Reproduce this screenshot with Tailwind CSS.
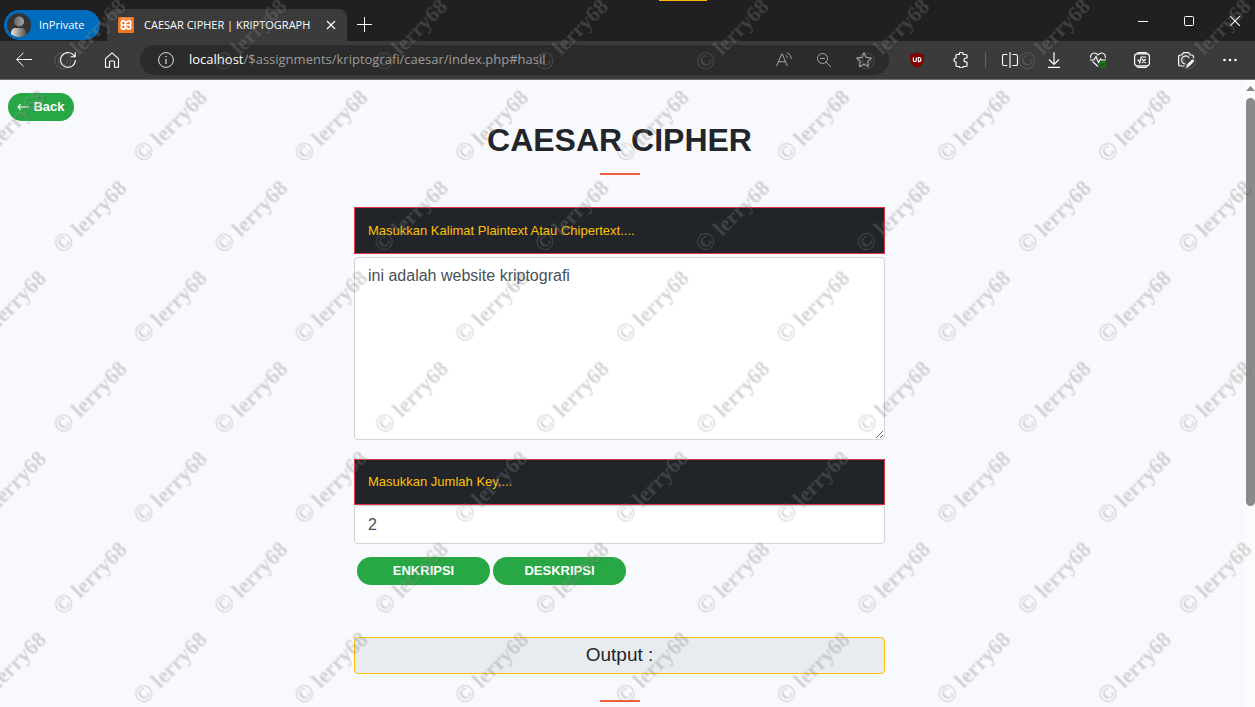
<!DOCTYPE html>
<html lang="id">
<head>
<meta charset="utf-8">
<meta name="viewport" content="width=device-width, initial-scale=1">
<title>CAESAR CIPHER | KRIPTOGRAPHY</title>
<script src="https://cdn.jsdelivr.net/npm/@tailwindcss/browser@4"></script>
</head>
<body class="flex h-screen flex-col overflow-hidden bg-[#f8f9fc] font-['Liberation_Sans',Arial,sans-serif] text-[#212529]">

<!-- Browser tab strip -->
<header class="relative flex h-[41px] shrink-0 items-end bg-[#202020] font-['Open_Sans','Noto_Sans',sans-serif] text-[11px] text-white">
  <div class="absolute left-[659px] top-0 h-px w-12 bg-[#ffb900]"></div>
  <button class="mb-px ml-1 flex h-[30px] w-24 items-center gap-2 rounded-full bg-[#006cbe] pl-[3px]">
    <svg class="size-6" viewBox="0 0 24 24">
      <defs>
        <linearGradient id="head"><stop offset="0" stop-color="#686664"/><stop offset="1" stop-color="#a8a6a4"/></linearGradient>
        <linearGradient id="torso"><stop offset="0" stop-color="#e8e6e4"/><stop offset="1" stop-color="#55534f"/></linearGradient>
        <clipPath id="disc"><circle cx="12" cy="12" r="12"/></clipPath>
      </defs>
      <circle cx="12" cy="12" r="12" fill="#363432"/>
      <g clip-path="url(#disc)"><path d="M4 24v-4c0-3 2-5 5-5h5c3 0 5 2 5 5v4z" fill="url(#torso)"/><circle cx="12" cy="8.500" r="5" fill="url(#head)"/></g>
    </svg>
    <span>InPrivate</span>
  </button>
  <div class="ml-[7px] flex h-8 w-60 items-center rounded-t-lg bg-[#3b3b3b] pl-[11px]">
    <svg class="size-4 shrink-0" viewBox="0 0 16 16"><rect width="16" height="16" rx="1" fill="#f37623"/><path d="M3 1.800h10" stroke="#fbd0ad" stroke-width=".8"/><path d="M6.900 8H5.300a2.100 2.100 0 1 1 2.100-2.100v4.200A2.100 2.100 0 1 1 5.300 8M9.100 8h1.600a2.100 2.100 0 1 0-2.100-2.100M8.600 10.100A2.100 2.100 0 1 0 10.700 8H7" fill="none" stroke="#fff" stroke-width="1.700"/></svg>
    <span class="ml-2.5 w-[173px] shrink-0 whitespace-nowrap">CAESAR CIPHER | KRIPTOGRAPH</span>
    <button class="ml-1 grid size-5 place-items-center" aria-label="Close tab"><svg class="size-[10px]" viewBox="0 0 10 10" stroke="#fff" stroke-width="1.100"><path d="M1 1l8 8M9 1l-8 8"/></svg></button>
  </div>
  <button class="ml-[7px] grid h-[34px] w-5 place-items-center" aria-label="New tab"><svg class="size-[15px]" viewBox="0 0 15 15" stroke="#fff"><path d="M0 7.500h15M7.500 0v15"/></svg></button>
  <div class="ml-auto flex h-full items-center gap-9 pr-[15px]">
    <button aria-label="Minimize"><svg class="size-[10px]" viewBox="0 0 10 10" stroke="#fff"><path d="M0 5.500h10"/></svg></button>
    <button aria-label="Maximize"><svg class="size-[10px]" viewBox="0 0 10 10" stroke="#fff" fill="none"><rect x=".5" y=".5" width="9" height="9" rx="1"/></svg></button>
    <button aria-label="Close"><svg class="size-[10px]" viewBox="0 0 10 10" stroke="#fff" stroke-width="1.100"><path d="M0 0l10 10M10 0L0 10"/></svg></button>
  </div>
</header>

<!-- Browser toolbar -->
<nav class="flex h-[39px] shrink-0 items-center border-b border-[#6e6e6e] bg-[#3b3b3b] pl-4 pr-[17px] text-white" aria-label="Browser">
  <button aria-label="Back"><svg class="size-4" viewBox="0 0 16 16" fill="none" stroke="#fff"><path d="M16 7.500H.7M7.500.7L.7 7.500l6.800 6.800"/></svg></button>
  <button class="ml-7" aria-label="Reload"><svg class="size-4" viewBox="0 0 16 16" fill="none" stroke="#fff" stroke-width="1.100"><path d="M15.400 8a7.400 7.400 0 1 1-2-5.100L15 4.500M15.200.3v4.400h-4.500"/></svg></button>
  <button class="ml-7" aria-label="Home"><svg class="size-4" viewBox="0 0 16 16" fill="none" stroke="#fff" stroke-width="1.100" stroke-linejoin="round"><path d="M1.500 6.600L8 .9l6.500 5.700v8.700h-4V10c0-.6-.4-1-1-1h-3c-.6 0-1 .4-1 1v5.300h-4z"/></svg></button>
  <div class="ml-5 flex h-[30px] min-w-0 flex-1 items-center rounded-full bg-[#2b2b2b] pl-[18px] pr-[17px]">
    <svg class="size-4 shrink-0" viewBox="0 0 16 16" fill="none" stroke="#e0e0e0"><circle cx="8" cy="8" r="7.400"/><path d="M8 7v5M8 4v1.300" stroke-width="1.200"/></svg>
    <div role="textbox" contenteditable="true" spellcheck="false" aria-label="Address" class="ml-[15px] flex-1 whitespace-nowrap font-['Open_Sans','Noto_Sans',sans-serif] text-[13px] text-[#9b9b9b] outline-none"><span class="text-white">localhost</span>/$assignments/kriptografi/caesar/index.php#hasil</div>
    <button aria-label="Read aloud"><svg class="size-4" viewBox="0 0 16 16" fill="none" stroke="#a6a6a6"><path d="M.6 14L5.700 2h.6l5 12M2.400 9.800h7.200M9.700 3c1 .7 1.500 1.800 1.500 3M11.200.7c2.500 1.300 4 3.500 4 6.300"/></svg></button>
    <button class="ml-6" aria-label="Zoom out"><svg class="size-4" viewBox="0 0 16 16" fill="none" stroke="#a6a6a6"><circle cx="6.500" cy="6.500" r="5"/><path d="M4 6.500h5M10 10l5 5"/></svg></button>
    <button class="ml-6" aria-label="Add to favorites"><svg class="size-4" viewBox="0 0 16 16" fill="none" stroke="#a6a6a6" stroke-width="1.100" stroke-linejoin="round"><path d="M8 .8l2.200 4.600 5.100.7-3.700 3.500.9 5.100L8 12.300l-4.500 2.400.9-5.100L.7 6.100l5.100-.7z"/></svg></button>
  </div>
  <div class="ml-5 flex shrink-0 items-center gap-7">
    <button aria-label="uBlock"><svg class="size-4" viewBox="0 0 16 16"><path d="M8 .3c2 1.400 4 2 6.700 2v6c0 3.300-2.500 5.500-6.700 7.400-4.200-1.900-6.700-4.100-6.700-7.400v-6C4 2.300 6 1.700 8 .3z" fill="#800000"/><path d="M4.400 5.500v2.800c0 1.800 2.900 1.800 2.900 0V5.500M9.300 5.500v4.100h.7c2.600 0 2.600-4.100 0-4.100z" fill="none" stroke="#fff" stroke-width="1.200"/></svg></button>
    <button aria-label="Extensions"><svg class="size-4" viewBox="0 0 16 16" fill="none" stroke="#fff" stroke-width="1.200" stroke-linejoin="round"><path d="M4 2.500h2.300a2 2 0 1 1 3.900 0h2.800a1 1 0 0 1 1 1V6h-1a2 2 0 1 0 0 4h1v3.500a1 1 0 0 1-1 1h-2.800a2 2 0 0 1-3.900 0H4a1 1 0 0 1-1-1V10a2 2 0 1 1 0-4V3.500a1 1 0 0 1 1-1z"/></svg></button>
    <div class="-mx-3 h-4 w-px bg-[#656565]"></div>
    <button aria-label="Split screen"><svg class="size-4" viewBox="0 0 16 16" fill="none" stroke="#fff" stroke-width="1.100"><path d="M8 0v16M5.500 2.500H2a1.500 1.500 0 0 0-1.500 1.500v8A1.500 1.500 0 0 0 2 13.500h3.500M10.500 2.500H14a1.500 1.500 0 0 1 1.500 1.500v8a1.500 1.500 0 0 1-1.500 1.500h-3.500"/></svg></button>
    <button aria-label="Downloads"><svg class="size-4" viewBox="0 0 16 16" fill="none" stroke="#fff" stroke-width="1.200"><path d="M8 .3v12M3 7.500l5 5 5-5M2 15.400h12"/></svg></button>
    <button aria-label="Browser essentials"><svg class="size-4" viewBox="0 0 16 16" fill="none" stroke="#fff" stroke-width="1.100"><path d="M.8 6C.1 3.500 1.700 1 4.300 1c1.500 0 2.800.9 3.700 2 .9-1.100 2.200-2 3.700-2 2.600 0 4.200 2.500 3.500 5M0 8h4l2-3.500 2.500 6L10.500 7l1 1H16M2.500 9.500L8 14.500"/><circle cx="12.500" cy="12.500" r="3.500" fill="#107c10" stroke="none"/><path d="M10.800 12.500l1.200 1.200 2-2.200" stroke="#333"/></svg></button>
    <button aria-label="Math solver"><svg class="size-4" viewBox="0 0 16 16" fill="none" stroke="#fff" stroke-width="1.200"><rect x=".6" y="1.800" width="14.800" height="12" rx="2.500"/><path d="M2.800 1.700C3 .8 3.700.6 4.500.6h7c.8 0 1.500.2 1.700 1.100M2.800 14c.2 1.100.9 1.400 1.700 1.400h7c.8 0 1.500-.3 1.700-1.400"/><path d="M3.500 8.200h1l1.200 2.600L7.200 5h5M8 7l3.700 4M11.700 7L8 11"/></svg></button>
    <button aria-label="Screenshot"><svg class="size-4" viewBox="0 0 16 16" fill="none" stroke="#fff" stroke-width="1.200" stroke-linejoin="round"><path d="M6.500 14H2.300A1.700 1.700 0 0 1 .6 12.300V4.700A1.700 1.700 0 0 1 2.300 3H4L5.300.7h5.400L12 3h1.700a1.700 1.700 0 0 1 1.700 1.700v1.500M11.300 6.300A4 4 0 1 0 7.500 12"/><path d="M8 16l.8-3.300 5-5c1.300-1 3 .7 2 2l-5 5z" fill="#fff" stroke="none"/></svg></button>
    <button aria-label="More"><svg class="size-4" viewBox="0 0 16 16" fill="#fff"><circle cx="2.500" cy="8" r="1.300"/><circle cx="8" cy="8" r="1.300"/><circle cx="13.500" cy="8" r="1.300"/></svg></button>
  </div>
</nav>

<!-- Page viewport -->
<div class="flex min-h-0 flex-1">
  <main class="min-w-0 flex-1 overflow-hidden pr-1">
    <div class="px-2 pt-[13px]">
      <a href="#" class="flex h-7 w-[66px] items-center justify-center rounded-full bg-[#28a745] text-[13px] font-bold text-white"><svg class="mr-1 size-3" viewBox="0 0 13 13" fill="none" stroke="#fff" stroke-width="1.200"><path d="M13 6.500H1M4 3.500l-3 3 3 3"/></svg>Back</a>
    </div>
    <h1 class="text-center text-[32px] font-bold leading-[38px]">CAESAR CIPHER</h1>
    <div class="mx-auto mt-3.5 h-0.5 w-10 bg-[#f05f40]"></div>
    <form class="mx-auto mt-8 max-w-[531px]" onsubmit="return false">
      <label for="kalimat" class="flex h-[47px] items-center border border-[#dc3545] bg-[#212529] px-[13px] text-[13px] text-[#ffc107]">Masukkan Kalimat Plaintext Atau Chipertext....</label>
      <textarea id="kalimat" class="mt-[3px] block h-[183px] w-full rounded border border-[#ced4da] bg-white px-[13px] py-1.5 text-base text-[#495057]">ini adalah website kriptografi</textarea>
      <label for="key" class="mt-[19px] flex h-[46px] items-center border border-[#dc3545] bg-[#212529] px-[13px] text-[13px] text-[#ffc107]">Masukkan Jumlah Key....</label>
      <input id="key" type="text" value="2" class="block h-[39px] w-full rounded border border-[#ced4da] bg-white px-[13px] text-base text-[#495057]">
      <div class="mt-[13px] flex gap-[3px] pl-[3px]">
        <button class="h-7 w-[133px] rounded-full bg-[#28a745] text-[13px] font-bold text-white">ENKRIPSI</button>
        <button class="h-7 w-[133px] rounded-full bg-[#28a745] text-[13px] font-bold text-white">DESKRIPSI</button>
      </div>
      <h2 id="hasil" class="mt-[52px] flex h-[37px] items-center justify-center rounded border border-[#ffc107] bg-[#e9ecef] text-[19px]">Output :</h2>
    </form>
    <div class="mx-auto mt-[26px] h-0.5 w-10 bg-[#f05f40]"></div>
  </main>
  <div class="flex w-3 shrink-0 flex-col items-end bg-[#fbfbfb] pt-1.5" aria-hidden="true">
    <svg class="mb-[7px] h-[5px] w-[9px]" viewBox="0 0 9 5"><path d="M4.500 0L9 5H0z" fill="#8a8a8a"/></svg>
    <div class="h-[408px] w-[9px] rounded-full bg-[#8a8a8a]"></div>
  </div>
</div>

<!-- Repeating diagonal watermark -->
<svg class="pointer-events-none fixed inset-0 h-full w-full" aria-hidden="true">
  <defs>
    <pattern id="mark" x="51" y="173" width="160.700" height="180.700" patternUnits="userSpaceOnUse">
      <g class="font-['Liberation_Serif',serif] text-[22px] font-bold">
        <g fill="#000" fill-opacity=".12">
          <text transform="translate(12 82) rotate(-45)"><tspan class="text-[25px]">©</tspan> lerry68</text>
          <text transform="translate(92 172) rotate(-45)"><tspan class="text-[25px]">©</tspan> lerry68</text>
        </g>
        <g fill="#bbb" fill-opacity=".22">
          <text transform="translate(11 81) rotate(-45)"><tspan class="text-[25px]">©</tspan> lerry68</text>
          <text transform="translate(91 171) rotate(-45)"><tspan class="text-[25px]">©</tspan> lerry68</text>
        </g>
      </g>
    </pattern>
  </defs>
  <rect width="100%" height="100%" fill="url(#mark)"/>
</svg>
</body>
</html>
